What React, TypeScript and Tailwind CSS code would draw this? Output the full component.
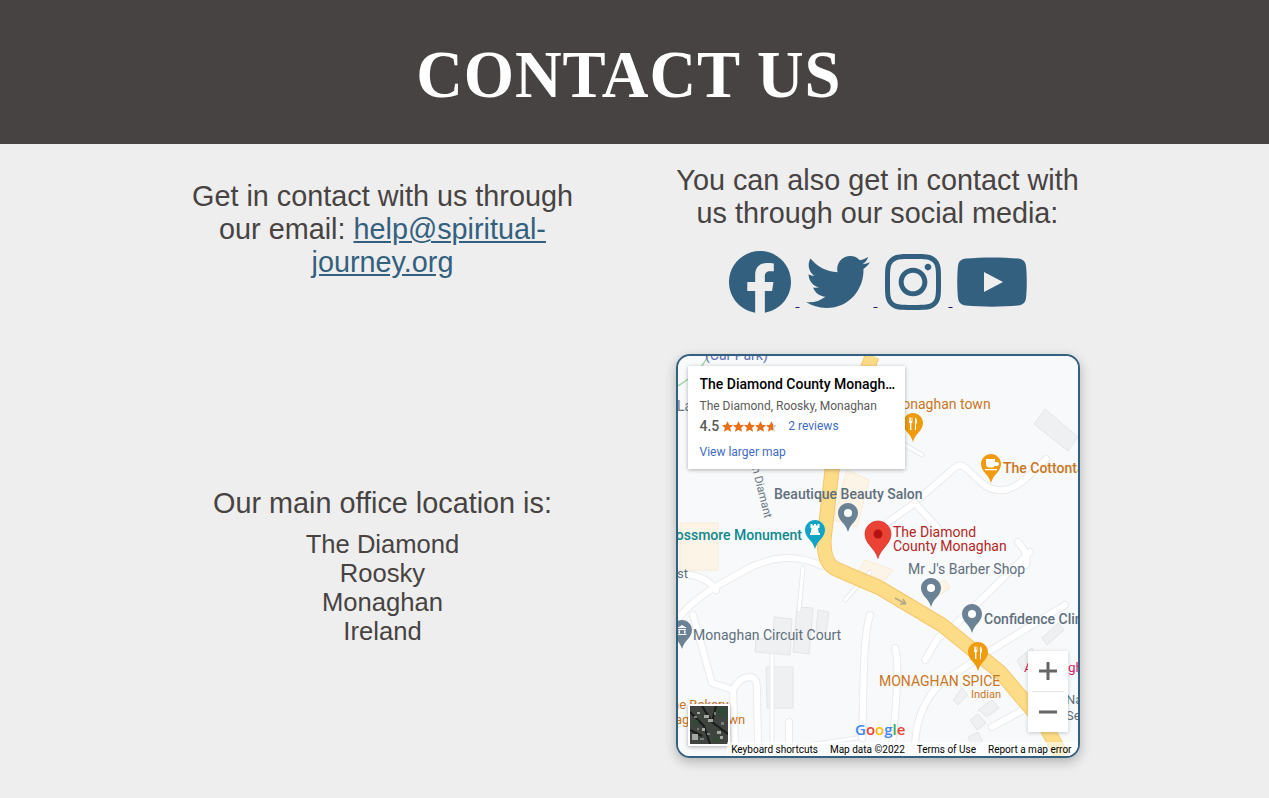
import { FaFacebook, FaTwitter, FaInstagram } from 'react-icons/fa';

const roads = [
  'M678 618 C695 598 712 588 753 566 C780 555 800 556 823 566',
  'M678 574 C695 574 708 578 716 590',
  'M693 615 L712 683 L733 690 L735 745',
  'M733 690 C738 680 745 677 750 677 C755 677 757 682 757 690 L758 745',
  'M920 498 L952 470 C958 464 962 464 968 470 C982 484 990 492 1005 490 C1020 487 1035 470 1046 459',
  'M915 503 L942 533 M915 503 L888 522',
  'M925 660 L938 638 L955 625 L1030 552',
  'M915 745 C916 720 925 698 942 682 L988 652 L1065 605',
  'M895 648 C899 660 897 700 892 745',
  'M992 727 L1038 702',
  'M1018 542 C1024 548 1028 555 1026 565',
  'M870 615 C862 640 864 700 862 738',
  'M789 722 L789 745',
];

const thinRoads = ['M803 568 L799 610', 'M772 655 L772 745', 'M857 738 L775 750', 'M870 572 L845 600', 'M905 445 L922 455'];

const buildings = [
  '774,617 792,619 790,655 755,652 756,638 773,640',
  '797,607 813,608 809,654 793,652',
  '818,610 829,612 826,633 816,632',
  '766,667 793,667 793,708 767,708',
  '1045,409 1078,437 1068,451 1034,424',
  '953,700 962,688 968,695 958,705',
  '978,710 992,700 999,708 987,717',
  '970,720 978,714 986,723 977,730',
  '968,737 978,732 983,742 973,747',
  '1042,638 1058,623 1064,630 1047,645',
  '1017,660 1032,648 1038,658 1022,670',
];

const peach = [
  '847,470 869,480 857,527 833,520',
  '680,523 718,523 718,570 680,570',
  '865,560 893,570 885,580 858,572',
  '925,590 945,580 950,588 932,600',
];

const PIN = 'M10 0C4.5 0 0 4.5 0 10c0 3.6 1.7 6.2 4 9 2.4 2.8 4.8 5.5 6 10 1.2-4.5 3.6-7.2 6-10 2.3-2.8 4-5.4 4-9C20 4.5 15.5 0 10 0z';

function GrayPin({ x, y }: { x: number; y: number }) {
  return (
    <g transform={`translate(${x} ${y})`}>
      <path d={PIN} fill="#6b8295" />
      <circle cx="10" cy="10" r="4" fill="#fff" />
    </g>
  );
}

function FoodPin({ x, y }: { x: number; y: number }) {
  return (
    <g transform={`translate(${x} ${y})`}>
      <path d={PIN} fill="#ee9b0e" />
      <path d="M6 4.5v4.2c0 .9.5 1.4 1 1.6V17h1.4v-6.7c.6-.2 1-.7 1-1.6V4.5h-.8v3.6h-.6V4.5h-.8v3.6h-.5V4.5zM12 4.5c1.4.3 2 2 2 4.2 0 1.200-.4 2-1 2.200V17h-1z" fill="#fff" />
    </g>
  );
}

function MapDrawing() {
  return (
    <svg viewBox="678 356 400 400" className="absolute inset-0 h-full w-full font-['Roboto',sans-serif]">
      <rect x="678" y="356" width="400" height="400" fill="#f8f9fb" />
      {peach.map((p) => (
        <polygon key={p} points={p} fill="#fdf4e8" stroke="#f8ead6" />
      ))}
      {buildings.map((p) => (
        <polygon key={p} points={p} fill="#eff0f2" stroke="#e3e5e8" />
      ))}
      {thinRoads.map((d) => (
        <path key={d} d={d} fill="none" stroke="#e8eaed" strokeWidth="5" strokeLinecap="round" />
      ))}
      {thinRoads.map((d) => (
        <path key={d} d={d} fill="none" stroke="#fff" strokeWidth="3" strokeLinecap="round" />
      ))}
      {roads.map((d) => (
        <path key={d} d={d} fill="none" stroke="#e8eaed" strokeWidth="8" strokeLinecap="round" strokeLinejoin="round" />
      ))}
      {roads.map((d) => (
        <path key={d} d={d} fill="none" stroke="#fff" strokeWidth="6" strokeLinecap="round" strokeLinejoin="round" />
      ))}
      <path d="M708 356 C700 372 690 378 678 386" fill="none" stroke="#9fd6a8" strokeWidth="1.500" />

      <path d="M872 356 L832 470 L824 540 C824 558 828 566 838 570 L880 588 L942 625 L1000 672 L1045 725 L1062 756" fill="none" stroke="#f5c66a" strokeWidth="15" strokeLinejoin="round" />
      <path d="M872 356 L832 470 L824 540 C824 558 828 566 838 570 L880 588 L942 625 L1000 672 L1045 725 L1062 756" fill="none" stroke="#fddc88" strokeWidth="13" strokeLinejoin="round" />
      <path d="M895 598 L906 604 M906 604 L900 604 M906 604 L903 599" stroke="#b3a98c" strokeWidth="1.500" fill="none" />

      <g fontSize="14">
        <text x="705" y="360" fill="#5b6db5">(Car Park)</text>
        <text x="677" y="411" fill="#6b7780">La</text>
        <text x="890" y="409" fill="#c9761d">Monaghan town</text>
        <text x="1003" y="473" fill="#c9761d" fontWeight="500">The Cottontail</text>
        <text x="774" y="499" fill="#5f6f7c" fontWeight="500">Beautique Beauty Salon</text>
        <text x="667" y="540" fill="#0d8a8f" fontWeight="500">Rossmore Monument</text>
        <text x="908" y="574" fill="#5f6f7c">Mr J's Barber Shop</text>
        <text x="984" y="624" fill="#5f6f7c" fontWeight="500">Confidence Clinic</text>
        <text x="693" y="640" fill="#5f6f7c">Monaghan Circuit Court</text>
        <text x="677" y="578" fill="#5f6f7c" fontSize="13">st</text>
        <text x="879" y="686" fill="#c9761d">MONAGHAN SPICE</text>
        <text x="971" y="698" fill="#c9761d" fontSize="11">Indian</text>
        <text y="672" fill="#d81b60" fontSize="13.500">
          <tspan x="1024">A</tspan>
          <tspan x="1068">gh</tspan>
        </text>
        <text x="1066" y="704" fill="#5f6f7c" fontSize="13">Na</text>
        <text x="1066" y="720" fill="#5f6f7c" fontSize="13">Se</text>
        <text x="672" y="709" fill="#c9761d" fontSize="13">he Bakery</text>
        <text x="649" y="724" fill="#c9761d" fontSize="13">Monaghan Town</text>
        <text x="893" y="537" fill="#b3261e">The Diamond</text>
        <text x="893" y="551" fill="#b3261e">County Monaghan</text>
        <text transform="translate(752 468) rotate(76)" fill="#6b7780" fontSize="11.500">n Diamant</text>
      </g>

      <GrayPin x={838} y={503} />
      <GrayPin x={921} y={578} />
      <GrayPin x={962} y={604} />
      <g transform="translate(672 620)">
        <path d={PIN} fill="#6b8295" />
        <path d="M10 5 L15 8 H5z M6 9h8v1H6z M6.500 10.500h1.500v3H6.500z M12 10.500h1.500v3H12z M5.500 14h9v1h-9z" fill="#fff" />
      </g>
      <FoodPin x={903} y={413} />
      <FoodPin x={968} y={642} />
      <g transform="translate(981 454)">
        <path d={PIN} fill="#ee9b0e" />
        <path d="M5 5h9v3h2a2 2 0 0 1 0 4h-2.500c-.6 1-1.500 1.500-2.500 1.500H8c-1.500 0-3-1.500-3-3.500z M4 15h12v1.200H4z" fill="#fff" />
      </g>
      <g transform="translate(805 520)">
        <path d={PIN} fill="#12a4c4" />
        <path d="M5.500 4h2v1.500h1.500V4h2v1.500h1.500V4h2v4h-1.500l.7 5H15v2H5v-2h.8l.7-5H5.500z" fill="#fff" />
      </g>
      <g transform="translate(865 521)">
        <path d="M13 0C5.800 0 0 5.800 0 13c0 5 2.400 8.400 5.500 12.200C8.500 29 11.500 32 13 37.500c1.500-5.500 4.500-8.500 7.500-12.300C23.600 21.400 26 18 26 13 26 5.800 20.200 0 13 0z" fill="#ea4335" stroke="#c5221f" strokeWidth=".6" />
        <circle cx="13" cy="13" r="4.500" fill="#b31412" />
      </g>

      <text x="855" y="735" fontSize="15" fontWeight="600" className="font-['Open_Sans',sans-serif]">
        <tspan fill="#4285f4">G</tspan>
        <tspan fill="#ea4335">o</tspan>
        <tspan fill="#fbbc05">o</tspan>
        <tspan fill="#4285f4">g</tspan>
        <tspan fill="#34a853">l</tspan>
        <tspan fill="#ea4335">e</tspan>
      </text>
    </svg>
  );
}

function Thumbnail() {
  return (
    <svg viewBox="0 0 38 38" className="h-full w-full">
      <rect width="38" height="38" fill="#3f443f" />
      <path d="M0 6 L14 20 L20 38 M12 0 L22 16 L38 28 M0 24 L12 30 M26 0 L22 16" stroke="#1a1c1b" strokeWidth="2" fill="none" />
      <path d="M14 9h5v3h-5z M18 13h5v3h-5z M2 28h6v6H2z M27 25h4v3h-4z M7 6h3v2H7z M30 30h3v3h-3z M12 22h3v3h-3z" fill="#a6a6a2" />
      <path d="M28 2h9v9h-9z M24 31h5v5h-5z M3 14h5v5H3z" fill="#2f4a35" />
      <path d="M4 10h3v2H4z M10 32h4v2h-4z M31 16h3v3h-3z M24 6h2v3h-2z M17 27h3v2h-3z M7 22h2v2H7z" fill="#787b78" />
    </svg>
  );
}

function Stars() {
  return (
    <svg viewBox="0 0 55 11" className="h-[11px] w-[55px]">
      <defs>
        <linearGradient id="half">
          <stop offset="60%" stopColor="#e7711b" />
          <stop offset="60%" stopColor="#ccc" />
        </linearGradient>
      </defs>
      {[0, 11, 22, 33, 44].map((x) => (
        <polygon
          key={x}
          transform={`translate(${x} 0)`}
          points="5.500,0.300 7.200,3.800 11,4.200 8.200,6.800 9,10.800 5.500,8.800 2,10.800 2.800,6.800 0,4.200 3.800,3.800"
          fill={x === 44 ? 'url(#half)' : '#e7711b'}
        />
      ))}
    </svg>
  );
}

function MapEmbed() {
  return (
    <div className="relative h-[404px] w-[404px] overflow-hidden rounded-[14px] border-2 border-[#34607f] shadow-[0_4px_12px_rgba(0,0,0,0.25)]">
      <MapDrawing />

      <div className="absolute left-[10px] top-[10px] h-[103px] w-[217px] bg-white pl-3 pr-[9px] pt-[10px] font-['Roboto',sans-serif] shadow-[0_1px_4px_rgba(0,0,0,0.3)]">
        <p className="truncate text-[14px] font-medium leading-4 text-black">The Diamond County Monaghan</p>
        <p className="mt-[6px] text-xs leading-4 text-[#5b5b5b]">The Diamond, Roosky, Monaghan</p>
        <div className="mt-1 flex items-center text-xs leading-4">
          <span className="text-[14px] font-medium text-[#5b5b5b]">4.5</span>
          <span className="ml-[3px]">
            <Stars />
          </span>
          <span className="ml-[11px] text-[#3f6bc4]">2 reviews</span>
        </div>
        <p className="mt-[10px] text-xs leading-4 text-[#3f6bc4]">View larger map</p>
      </div>

      <div className="absolute bottom-[10px] left-[10px] h-[42px] w-[42px] border-2 border-white shadow-[0_1px_4px_rgba(0,0,0,0.3)]">
        <Thumbnail />
      </div>

      <div className="absolute left-[350px] top-[295px] flex w-[40px] flex-col bg-white shadow-[0_1px_4px_rgba(0,0,0,0.2)]">
        <div className="flex h-10 items-center justify-center">
          <svg viewBox="0 0 18 18" className="h-[18px] w-[18px]">
            <path d="M7.500 0h3v7.500H18v3h-7.500V18h-3v-7.500H0v-3h7.500z" fill="#666" />
          </svg>
        </div>
        <div className="mx-1 h-px bg-[#e6e6e6]" />
        <div className="flex h-10 items-center justify-center">
          <svg viewBox="0 0 18 18" className="h-[18px] w-[18px]">
            <path d="M0 7.500h18v3H0z" fill="#666" />
          </svg>
        </div>
      </div>

      <div className="absolute bottom-0 right-0 flex h-[14px] items-center gap-3 bg-white/60 pl-1 pr-[6px] font-['Roboto',sans-serif] text-[10px] text-black">
        <span>Keyboard shortcuts</span>
        <span>Map data ©2022</span>
        <span>Terms of Use</span>
        <span>Report a map error</span>
      </div>
    </div>
  );
}

export default function App() {
  return (
    <div className="min-h-[798px] bg-[#eeeeee] font-['Liberation_Sans',Arial,sans-serif] text-[#474342]">
      {/* Header */}
      <header className="flex h-36 items-center justify-center bg-[#474342] pr-[12px] pt-[3px]">
        <h1 className="scale-x-95 font-['Liberation_Serif',serif] text-[68px] font-bold leading-none tracking-[1px] text-white">
          CONTACT US
        </h1>
      </header>

      <main className="grid grid-cols-[495px_495px] pb-10 pl-[135px]">
        {/* Email */}
        <div className="flex justify-center pt-9">
          <p className="w-[400px] text-center text-[28.8px] leading-[33px]">
            Get in contact with us through our email:{' '}
            <a href="#" className="text-[#34607f] underline">
              help@spiritual-journey.org
            </a>
          </p>
        </div>

        {/* Social */}
        <div className="flex flex-col items-center pt-5">
          <p className="w-[410px] text-center text-[28.8px] leading-[33px]">
            You can also get in contact with us through our social media:
          </p>
          <div className="mt-5 h-[104px] whitespace-nowrap text-center font-['Liberation_Serif',serif] text-[16px] text-[#1a1a6e]">
            <a href="#" className="underline">
              <FaFacebook className="mx-1 inline align-[-8px] text-[64px] text-[#34607f]" />{' '}
            </a>
            <a href="#" className="underline">
              <FaTwitter className="ml-[6px] mr-1 inline align-[-8px] text-[64px] text-[#34607f]" />{' '}
            </a>
            <a href="#" className="underline">
              <FaInstagram className="ml-[3px] mr-1 inline align-[-8px] text-[64px] text-[#34607f]" />{' '}
            </a>
            <a href="#">
              <svg viewBox="0 0 72 64" className="ml-[3px] mr-1 inline h-16 w-[72px] align-[-8px]">
                <path
                  d="M10 8.500 C25 7 47 7 62 8.500 C67 9 69.500 11.500 70 16 C71 24 71 40 70 48 C69.500 52.500 67 55 62 55.500 C47 57 25 57 10 55.500 C5 55 2.500 52.500 2 48 C1 40 1 24 2 16 C2.500 11.500 5 9 10 8.500z"
                  fill="#34607f"
                />
                <path d="M28 22 L47 32 L28 42z" fill="#eeeeee" />
              </svg>
            </a>
          </div>
        </div>

        {/* Address */}
        <div className="flex flex-col items-center justify-center pt-5 text-center">
          <h2 className="text-[28.8px] leading-[33px]">Our main office location is:</h2>
          <address className="mt-[10px] text-[25.6px] not-italic leading-[29px]">
            <p>The Diamond</p>
            <p>Roosky</p>
            <p>Monaghan</p>
            <p>Ireland</p>
          </address>
        </div>

        {/* Map */}
        <div className="flex justify-center">
          <MapEmbed />
        </div>
      </main>
    </div>
  );
}
